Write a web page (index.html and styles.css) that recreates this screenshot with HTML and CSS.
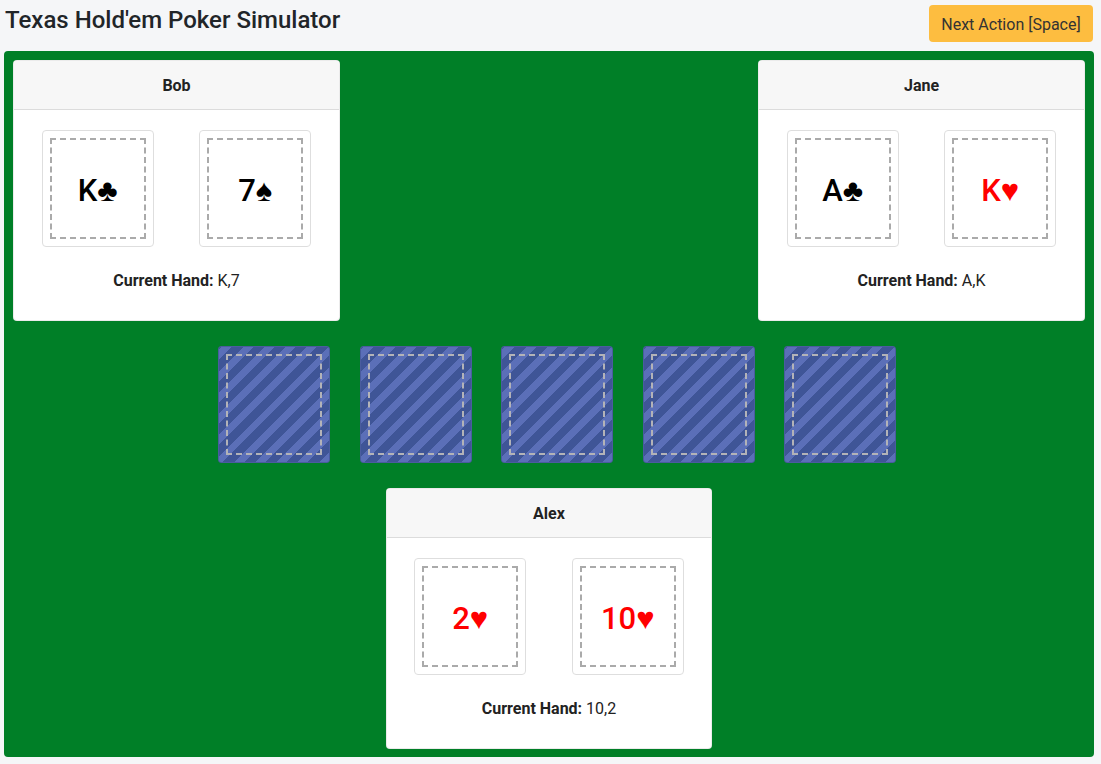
FILE: index.html
```html
<!DOCTYPE html>
<html>
<head>
<meta charset="utf-8">
<title>Texas Hold'em Poker Simulator</title>
<link rel="stylesheet" href="styles.css">
</head>
<body>
<header class="topbar">
  <h1 class="title">Texas Hold'em Poker Simulator</h1>
  <button class="next-btn">Next Action [Space]</button>
</header>
<main class="table">
  <div class="top-row">
    <section class="player">
      <div class="player-head">Bob</div>
      <div class="player-body">
        <div class="cards">
          <div class="card"><div class="card-face black">K♣</div></div>
          <div class="card"><div class="card-face black">7♠</div></div>
        </div>
        <p class="hand"><b>Current Hand:</b> K,7</p>
      </div>
    </section>
    <section class="player">
      <div class="player-head">Jane</div>
      <div class="player-body">
        <div class="cards">
          <div class="card"><div class="card-face black">A♣</div></div>
          <div class="card"><div class="card-face red">K♥</div></div>
        </div>
        <p class="hand"><b>Current Hand:</b> A,K</p>
      </div>
    </section>
  </div>
  <div class="community">
    <div class="card back"><div class="card-face"></div></div>
    <div class="card back"><div class="card-face"></div></div>
    <div class="card back"><div class="card-face"></div></div>
    <div class="card back"><div class="card-face"></div></div>
    <div class="card back"><div class="card-face"></div></div>
  </div>
  <div class="bottom-row">
    <section class="player narrow">
      <div class="player-head">Alex</div>
      <div class="player-body">
        <div class="cards">
          <div class="card"><div class="card-face red">2♥</div></div>
          <div class="card"><div class="card-face red">10♥</div></div>
        </div>
        <p class="hand"><b>Current Hand:</b> 10,2</p>
      </div>
    </section>
  </div>
</main>
</body>
</html>
```
FILE: styles.css
```css
html, body {
  margin: 0;
  padding: 0;
}
body {
  background: #f5f6f8;
  font-family: Roboto, "Liberation Sans", Arial, sans-serif;
  color: #212529;
}
.topbar {
  display: flex;
  justify-content: space-between;
  align-items: flex-start;
  height: 51px;
  padding: 0 8px 0 5px;
  box-sizing: border-box;
}
.title {
  margin: 6px 0 0 0;
  font-size: 24px;
  font-weight: 500;
  line-height: 29px;
  color: #212529;
}
.next-btn {
  margin-top: 5px;
  width: 164px;
  height: 37px;
  border: none;
  border-radius: 4px;
  background: #fdbd40;
  color: #333;
  font-family: Roboto, "Liberation Sans", Arial, sans-serif;
  font-size: 16px;
  padding: 2px 0 0 0;
}
.table {
  margin: 0 7px 0 4px;
  height: 706px;
  box-sizing: border-box;
  background: #007f27;
  border-radius: 4px;
  padding: 9px;
  display: flex;
  flex-direction: column;
}
.top-row {
  display: flex;
  justify-content: space-between;
}
.player {
  width: 327px;
  background: #fff;
  border-radius: 4px;
  overflow: hidden;
  border: 1px solid rgba(0,0,0,0.08);
  box-sizing: border-box;
}
.player.narrow {
  width: 326px;
}
.player-head {
  height: 49px;
  box-sizing: border-box;
  background: #f7f7f7;
  border-bottom: 1px solid #dcdcdc;
  display: flex;
  align-items: center;
  justify-content: center;
  font-weight: 700;
  font-size: 16px;
  color: #222;
}
.player-body {
  padding: 20px 0 0 0;
  height: 210px;
  box-sizing: border-box;
}
.cards {
  display: flex;
  justify-content: center;
  gap: 45.5px;
}
.card {
  width: 112px;
  height: 117px;
  box-sizing: border-box;
  border: 1px solid #dedede;
  border-radius: 4px;
  padding: 7px;
  background: #fff;
}
.card-face {
  height: 100%;
  box-sizing: border-box;
  border: 2px dashed #aaa;
  display: flex;
  align-items: center;
  justify-content: center;
  padding-top: 4px;
  font-size: 31px;
  font-weight: 500;
}
.black { color: #000; }
.red { color: #ff0000; }
.hand {
  margin: 24px 0 0 0;
  text-align: center;
  font-size: 16px;
  line-height: 20px;
  color: #222;
}
.hand b { font-weight: 700; }
.community {
  display: flex;
  justify-content: center;
  gap: 29.5px;
  margin-top: 25px;
  padding-left: 16px;
}
.card.back {
  border: 1px solid #4a5c9e;
  border-radius: 3px;
  background: repeating-linear-gradient(-45deg, #5b6fb8 0 7px, #3f5597 7px 15px);
}
.card.back .card-face {
  border-color: #b3b3b8;
  padding-top: 0;
}
.bottom-row {
  display: flex;
  justify-content: center;
  margin-top: 25px;
}
```
